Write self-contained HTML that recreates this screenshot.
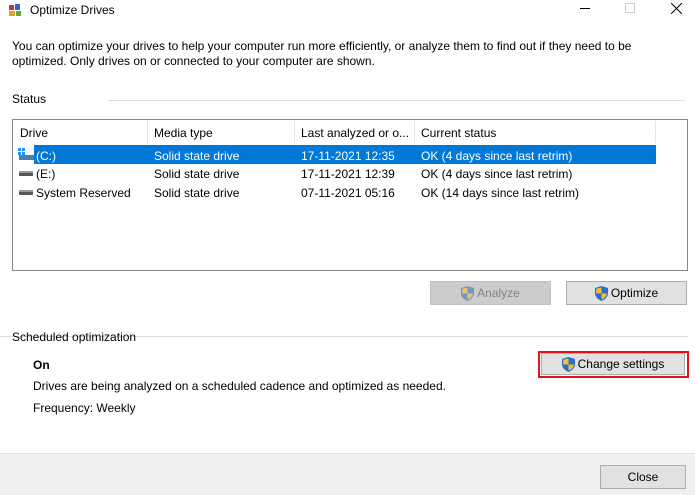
<!DOCTYPE html>
<html><head><style>
*{margin:0;padding:0;box-sizing:border-box}
body{width:695px;height:495px;background:#fff;font-family:"Liberation Sans",sans-serif;font-size:12px;color:#000;position:relative;overflow:hidden}
.a{position:absolute;white-space:nowrap}
.btn{position:absolute;background:#e1e1e1;border:1px solid #adadad;display:flex;align-items:center;justify-content:center;font-size:12px}
.sh{display:inline-block;width:13px;height:15px;margin-right:3px;vertical-align:-3px}
</style></head><body>
<svg class="a" style="left:8px;top:3px" width="14" height="14"><rect x="1" y="2" width="5" height="5" fill="#c33"/><rect x="7" y="1" width="5" height="6" fill="#36c"/><rect x="1" y="8" width="6" height="5" fill="#e8a020"/><rect x="8" y="8" width="5" height="5" fill="#6a3"/></svg>
<div class="a" style="left:30px;top:3px">Optimize Drives</div>
<div class="a" style="left:580px;top:8px;width:10px;height:1px;background:#000"></div>
<div class="a" style="left:625px;top:3px;width:10px;height:10px;border:1px solid #ccc"></div>
<svg class="a" style="left:671px;top:3px" width="11" height="11"><path d="M0 0L11 11M11 0L0 11" stroke="#000" stroke-width="1"/></svg>
<div class="a" style="left:12px;top:39px;line-height:15px">You can optimize your drives to help your computer run more efficiently, or analyze them to find out if they need to be<br>optimized. Only drives on or connected to your computer are shown.</div>
<div class="a" style="left:12px;top:92px">Status</div>
<div class="a" style="left:108px;top:100px;width:577px;height:1px;background:#ddd"></div>
<div class="a" style="left:12px;top:119px;width:676px;height:152px;border:1px solid #828790"></div>
<div class="a" style="left:147px;top:121px;width:1px;height:22px;background:#e5e5e5"></div>
<div class="a" style="left:294px;top:121px;width:1px;height:22px;background:#e5e5e5"></div>
<div class="a" style="left:414px;top:121px;width:1px;height:22px;background:#e5e5e5"></div>
<div class="a" style="left:655px;top:121px;width:1px;height:22px;background:#e5e5e5"></div>
<div class="a" style="left:20px;top:126px">Drive</div>
<div class="a" style="left:154px;top:126px">Media type</div>
<div class="a" style="left:301px;top:126px">Last analyzed or o...</div>
<div class="a" style="left:421px;top:126px">Current status</div>
<div class="a" style="left:34px;top:145px;width:622px;height:19px;background:#0078d7"></div>
<svg class="a" style="left:18px;top:148px" width="16" height="13"><rect x="0" y="0" width="3" height="3" fill="#1e90ff"/><rect x="4" y="0" width="3" height="3" fill="#1e90ff"/><rect x="0" y="4" width="3" height="3" fill="#1e90ff"/><rect x="4" y="4" width="3" height="3" fill="#1e90ff"/><rect x="1" y="7" width="15" height="5" fill="#4a7fb0"/></svg>
<svg class="a" style="left:19px;top:170px" width="14" height="7"><rect x="0" y="1" width="14" height="5" rx="1" fill="#555"/><rect x="0" y="1" width="14" height="2" fill="#999"/></svg>
<svg class="a" style="left:19px;top:189px" width="14" height="7"><rect x="0" y="1" width="14" height="5" rx="1" fill="#555"/><rect x="0" y="1" width="14" height="2" fill="#999"/></svg>
<div class="a" style="left:36px;top:149px;color:#fff">(C:)</div>
<div class="a" style="left:154px;top:149px;color:#fff">Solid state drive</div>
<div class="a" style="left:301px;top:149px;color:#fff">17-11-2021 12:35</div>
<div class="a" style="left:421px;top:149px;color:#fff">OK (4 days since last retrim)</div>
<div class="a" style="left:36px;top:167px">(E:)</div>
<div class="a" style="left:154px;top:167px">Solid state drive</div>
<div class="a" style="left:301px;top:167px">17-11-2021 12:39</div>
<div class="a" style="left:421px;top:167px">OK (4 days since last retrim)</div>
<div class="a" style="left:36px;top:186px">System Reserved</div>
<div class="a" style="left:154px;top:186px">Solid state drive</div>
<div class="a" style="left:301px;top:186px">07-11-2021 05:16</div>
<div class="a" style="left:421px;top:186px">OK (14 days since last retrim)</div>
<div class="btn" style="left:430px;top:281px;width:121px;height:24px;background:#ccc;border-color:#bfbfbf;color:#838383"><svg class="sh" viewBox="0 0 13 15" style="opacity:.55"><path d="M6.5 0L13 2V7C13 11 10 13.5 6.5 15C3 13.5 0 11 0 7V2Z" fill="#2c6fc4"/><path d="M6.5 1.5V7.5H1.2V2.8Z M6.5 7.5H11.8C11.5 10.5 9.5 12.5 6.5 13.5Z" fill="#f2c230"/></svg>Analyze</div>
<div class="btn" style="left:566px;top:281px;width:121px;height:24px"><svg class="sh" viewBox="0 0 13 15"><path d="M6.5 0L13 2V7C13 11 10 13.5 6.5 15C3 13.5 0 11 0 7V2Z" fill="#2c6fc4"/><path d="M6.5 1.5V7.5H1.2V2.8Z M6.5 7.5H11.8C11.5 10.5 9.5 12.5 6.5 13.5Z" fill="#f2c230"/></svg>Optimize</div>
<div class="a" style="left:0;top:336px;width:688px;height:1px;background:#ddd"></div>
<div class="a" style="left:12px;top:330px">Scheduled optimization</div>
<div class="a" style="left:33px;top:358px;font-weight:bold">On</div>
<div class="a" style="left:33px;top:379px">Drives are being analyzed on a scheduled cadence and optimized as needed.</div>
<div class="a" style="left:33px;top:401px">Frequency: Weekly</div>
<div class="a" style="left:538px;top:351px;width:151px;height:27px;border:2px solid #e0141e"></div>
<div class="btn" style="left:541px;top:353px;width:144px;height:22px"><svg class="sh" viewBox="0 0 13 15"><path d="M6.5 0L13 2V7C13 11 10 13.5 6.5 15C3 13.5 0 11 0 7V2Z" fill="#2c6fc4"/><path d="M6.5 1.5V7.5H1.2V2.8Z M6.5 7.5H11.8C11.5 10.5 9.5 12.5 6.5 13.5Z" fill="#f2c230"/></svg>Change settings</div>
<div class="a" style="left:0;top:453px;width:695px;height:42px;background:#f0f0f0;border-top:1px solid #dfdfdf"></div>
<div class="btn" style="left:600px;top:465px;width:86px;height:24px">Close</div>
</body></html>
